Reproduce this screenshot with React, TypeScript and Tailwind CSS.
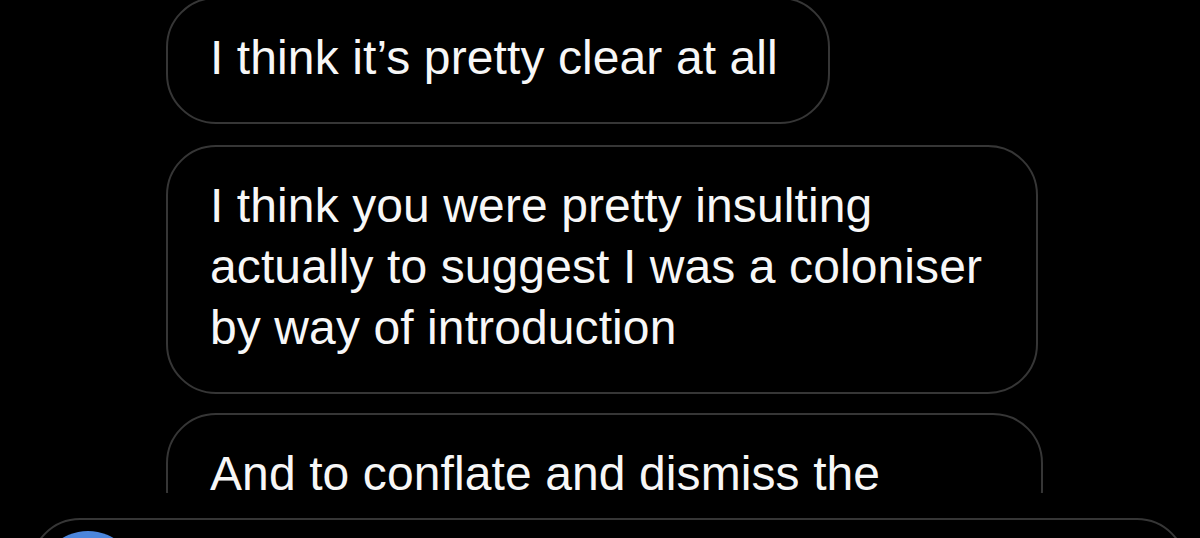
const FONT = { fontFamily: '"Liberation Sans", Arial, sans-serif' };

interface BubbleProps {
  lines: string[];
  width: string;
  className?: string;
}

function Bubble({ lines, width, className = '' }: BubbleProps) {
  return (
    <div
      className={`${width} ${className} shrink-0 rounded-[50px] border-2 border-[#363636] pl-[42px] pr-[20px] pt-[28px] pb-[34px] text-[48px] leading-[61px] tracking-[0.1px] text-[#f7f7f7] whitespace-nowrap`}
    >
      {lines.map((line, i) => (
        <div key={i}>{line}</div>
      ))}
    </div>
  );
}

export default function App() {
  return (
    <div className="h-[538px] w-full overflow-hidden bg-black" style={FONT}>
      {/* Messages */}
      <div className="h-[493px] overflow-hidden">
        <div className="-mt-[3px] flex flex-col pl-[166px]">
          <Bubble width="w-[664px]" lines={['I think it’s pretty clear at all']} />
          <Bubble
            width="w-[872px]"
            className="mt-[21px]"
            lines={[
              'I think you were pretty insulting',
              'actually to suggest I was a coloniser',
              'by way of introduction',
            ]}
          />
          <Bubble width="w-[877px]" className="mt-[19px]" lines={['And to conflate and dismiss the']} />
        </div>
      </div>

      {/* Composer */}
      <div className="mt-[25px] ml-[30px] flex h-[126px] w-[1157px] items-start rounded-[50px] border-2 border-[#363636] pl-[6px] pt-[11px]">
        <div className="h-[100px] w-[100px] rounded-full bg-[#4b86dc]" />
      </div>
    </div>
  );
}
